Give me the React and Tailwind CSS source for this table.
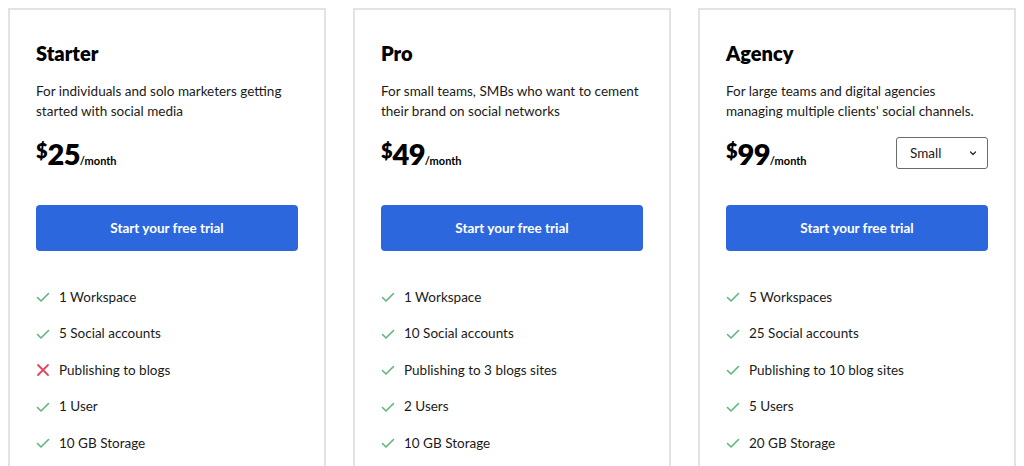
import React from 'react'

const plans = [
  {
    name: 'Starter',
    desc: 'For individuals and solo marketers getting started with social media',
    price: '25',
    features: [
      ['1 Workspace', true],
      ['5 Social accounts', true],
      ['Publishing to blogs', false],
      ['1 User', true],
      ['10 GB Storage', true],
    ],
  },
  {
    name: 'Pro',
    desc: 'For small teams, SMBs who want to cement their brand on social networks',
    price: '49',
    features: [
      ['1 Workspace', true],
      ['10 Social accounts', true],
      ['Publishing to 3 blogs sites', true],
      ['2 Users', true],
      ['10 GB Storage', true],
    ],
  },
  {
    name: 'Agency',
    desc: "For large teams and digital agencies managing multiple clients' social channels.",
    price: '99',
    select: true,
    features: [
      ['5 Workspaces', true],
      ['25 Social accounts', true],
      ['Publishing to 10 blog sites', true],
      ['5 Users', true],
      ['20 GB Storage', true],
    ],
  },
]

const Check = () => (
  <svg width="14" height="14" viewBox="0 0 14 14" fill="none" stroke="#5fb77f" strokeWidth="1.6" strokeLinecap="round" strokeLinejoin="round">
    <path d="M1.5 7.5 L5 11 L12.5 3.5" />
  </svg>
)

const Cross = () => (
  <svg width="14" height="14" viewBox="0 0 14 14" fill="none" stroke="#e0475d" strokeWidth="1.8" strokeLinecap="round">
    <path d="M2 2 L12 12 M12 2 L2 12" />
  </svg>
)

const Card = ({ plan }) => (
  <div className="w-[318px] shrink-0 border-2 border-[#e3e3e3] border-b-0 px-[26px] pt-[31px] h-[470px]">
    <h2 className="text-[20px] font-extrabold text-black leading-[24px]">{plan.name}</h2>
    <p className="mt-[16px] text-[13.5px] leading-[20px] text-[#1a1a1a]">{plan.desc}</p>
    <div className="mt-[15px] flex items-center justify-between h-[34px]">
      <div className="flex items-end text-black">
        <span className="text-[20px] font-extrabold leading-none self-start mt-[1px]">$</span>
        <span className="text-[29px] font-extrabold leading-none tracking-tight">{plan.price}</span>
        <span className="text-[11px] font-bold leading-none mb-[2px]">/month</span>
      </div>
      {plan.select && (
        <div className="w-[92px] h-[32px] border border-[#6b6b6b] rounded-[3px] flex items-center justify-between pl-[13px] pr-[9px] text-[13.5px] text-[#1a1a1a]">
          <span>Small</span>
          <svg width="10" height="10" viewBox="0 0 10 10" fill="none" stroke="#333" strokeWidth="1.4" strokeLinecap="round" strokeLinejoin="round">
            <path d="M2.5 4 L5 6.5 L7.5 4" />
          </svg>
        </div>
      )}
    </div>
    <button className="mt-[35px] w-full h-[46px] rounded-[4px] bg-[#2d67dd] text-white text-[13.5px] font-bold">
      Start your free trial
    </button>
    <ul className="mt-[37px] flex flex-col gap-[18.5px]">
      {plan.features.map(([label, ok]) => (
        <li key={label} className="flex items-center h-[18px] text-[13.5px] text-[#1a1a1a]">
          <span className="w-[23px] flex items-center">{ok ? <Check /> : <Cross />}</span>
          <span>{label}</span>
        </li>
      ))}
    </ul>
  </div>
)

export default function App() {
  return (
    <div className="w-[1024px] h-[466px] overflow-hidden bg-white pt-[8px] pl-[8px] flex gap-[27px] font-['Lato',sans-serif]">
      {plans.map((p) => (
        <Card key={p.name} plan={p} />
      ))}
    </div>
  )
}
